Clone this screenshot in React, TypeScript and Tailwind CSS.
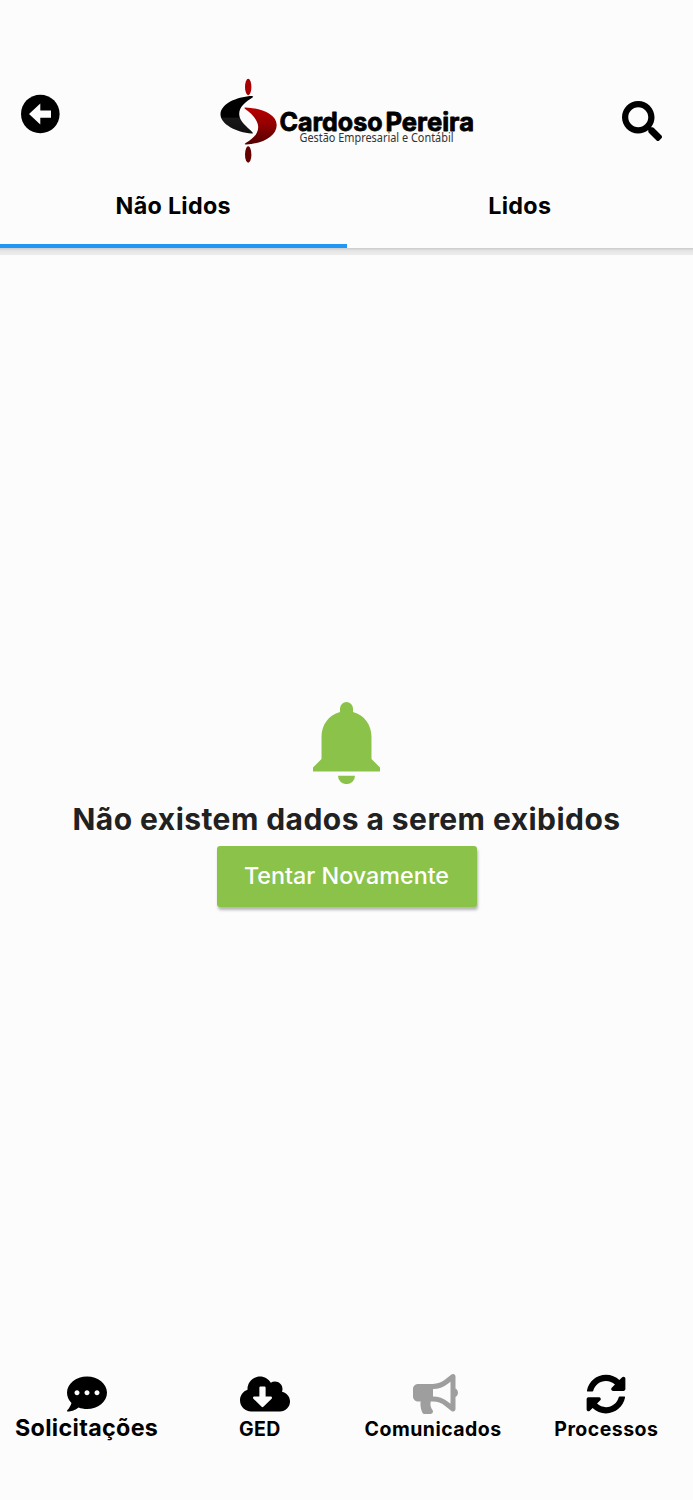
import type { ReactNode } from "react";
import { FaBullhorn, FaCloudDownloadAlt, FaCommentDots, FaSearch, FaSyncAlt } from "react-icons/fa";

function Logo() {
  return (
    <svg viewBox="0 0 256 88" className="h-[88px] w-[256px] overflow-visible" aria-label="Cardoso Pereira">
      <defs>
        <linearGradient id="red" x1="0" y1="0" x2="0" y2="1">
          <stop offset="0" stopColor="#b80000" />
          <stop offset="0.5" stopColor="#900000" />
          <stop offset="1" stopColor="#500000" />
        </linearGradient>
        <linearGradient id="dark" x1="0" y1="0" x2="0" y2="1">
          <stop offset="0.56" stopColor="#000" />
          <stop offset="0.6" stopColor="#181818" />
          <stop offset="1" stopColor="#101010" />
        </linearGradient>
      </defs>
      <g transform="translate(0.2 0)">
        <ellipse cx="29" cy="10" rx="3.2" ry="8.2" fill="#a80000" />
        <ellipse cx="29" cy="77.5" rx="3.2" ry="8.2" fill="#650000" />
        <path d="M34 20C34 19 32 18.700 29 19.200C14 21 1.300 28 1.300 37.500C1.300 47 17 55.500 32.500 56.500C34 56.500 34 56 33 55C27 49 20 44 20 37C20 30 26 25 34 20Z" fill="url(#dark)" />
        <path d="M26.500 30.500C41 31 57.500 37 57.500 48C57.500 59 44 66.500 27 67.500C25 67.600 25 67 26.500 66C34 61.500 39 57 39 50C39 43 32 36 26 32C25 31 25 30.500 26.500 30.500Z" fill="url(#red)" />
      </g>
      <text x="60.500" y="53.500" textLength="103" lengthAdjust="spacingAndGlyphs" fontFamily="Inter, sans-serif" fontSize="25.500" fontWeight="700" stroke="#000" strokeWidth="0.8" strokeLinejoin="round">Cardoso</text>
      <text x="166.500" y="53.500" textLength="88.500" lengthAdjust="spacingAndGlyphs" fontFamily="Inter, sans-serif" fontSize="25.500" fontWeight="700" stroke="#000" strokeWidth="0.8" strokeLinejoin="round">Pereira</text>
      <text x="80.500" y="65" textLength="154" lengthAdjust="spacingAndGlyphs" fontFamily="'Noto Sans', sans-serif" fontSize="12" fill="#333">Gestão Empresarial e Contábil</text>
    </svg>
  );
}

function BackIcon() {
  return (
    <svg viewBox="0 0 40 40" className="size-10">
      <circle cx="20.300" cy="20" r="19.300" />
      <path d="M9 20L20.300 9.500V16.500H31V23.700H20.300V30.500Z" fill="#fcfcfc" />
    </svg>
  );
}

function BellIcon() {
  return (
    <svg viewBox="0 0 69 82" className="h-[82px] w-[69px]" fill="#8bc34a">
      <path d="M28 10V6.500a6.500 6.500 0 0 1 13 0V10C52.500 13 59.500 23 59.500 35V57L68 65.500V69.500H1V65.500L9.500 57V35C9.500 23 16.500 13 28 10Z" />
      <path d="M26 73.800h17a8.500 8.300 0 0 1-17 0Z" />
    </svg>
  );
}

function NavItem({ icon, label, active, large }: { icon: ReactNode; label: string; active?: boolean; large?: boolean }) {
  return (
    <button className="flex w-1/4 flex-col items-center whitespace-nowrap">
      <span className={active ? "text-[#9e9e9e]" : "text-black"}>{icon}</span>
      <span className={large ? "text-[23.3px] leading-[28px] font-bold tracking-[0.33px]" : "mt-px text-[19.5px] leading-[28px] font-bold tracking-[0.47px]"}>{label}</span>
    </button>
  );
}

export default function App() {
  return (
    <div className="flex h-[1500px] w-[693px] flex-col overflow-hidden bg-[#fcfcfc] font-[Inter,sans-serif] text-black">
      <header className="flex h-[248px] shrink-0 flex-col pt-[77px]">
        <div className="flex h-[88px] items-start justify-between pr-[31px] pl-5">
          <button className="mt-[17px] w-[199px]"><BackIcon /></button>
          <Logo />
          <button className="mt-[23.5px] flex w-[187px] justify-end"><FaSearch className="size-10" /></button>
        </div>
        <nav className="flex h-[83px] text-[23.3px] leading-[30px] font-bold tracking-[0.3px]">
          <button className="flex w-[346.5px] justify-center border-b-4 border-[#2196f3] pt-[26px]">Não Lidos</button>
          <button className="flex w-[346.5px] justify-center pt-[26px]">Lidos</button>
        </nav>
      </header>
      <div className="h-[7px] shrink-0 bg-linear-to-b from-[#c9c9c9] via-[#e6e6e6] via-40% to-[#ececec]" />
      <main className="flex flex-1 flex-col items-center pt-[447px]">
        <BellIcon />
        <p className="mt-[15px] text-[30px] leading-[40px] font-bold tracking-[0.44px] whitespace-nowrap text-[#212121]">Não existem dados a serem exibidos</p>
        <button className="mt-[7px] h-[60.5px] w-[260px] rounded-[3px] bg-[#8bc34a] text-[23.3px] font-medium text-white shadow-[1px_3px_3px_rgba(0,0,0,0.28)]">Tentar Novamente</button>
      </main>
      <footer className="flex h-[126.5px] shrink-0">
        <NavItem large icon={<FaCommentDots className="size-10" />} label="Solicitações" />
        <NavItem icon={<FaCloudDownloadAlt className="ml-[10px] h-10 w-[50px]" />} label="GED" />
        <NavItem active icon={<FaBullhorn className="ml-[5px] h-10 w-[45px]" />} label="Comunicados" />
        <NavItem icon={<FaSyncAlt className="size-10" />} label="Processos" />
      </footer>
    </div>
  );
}
